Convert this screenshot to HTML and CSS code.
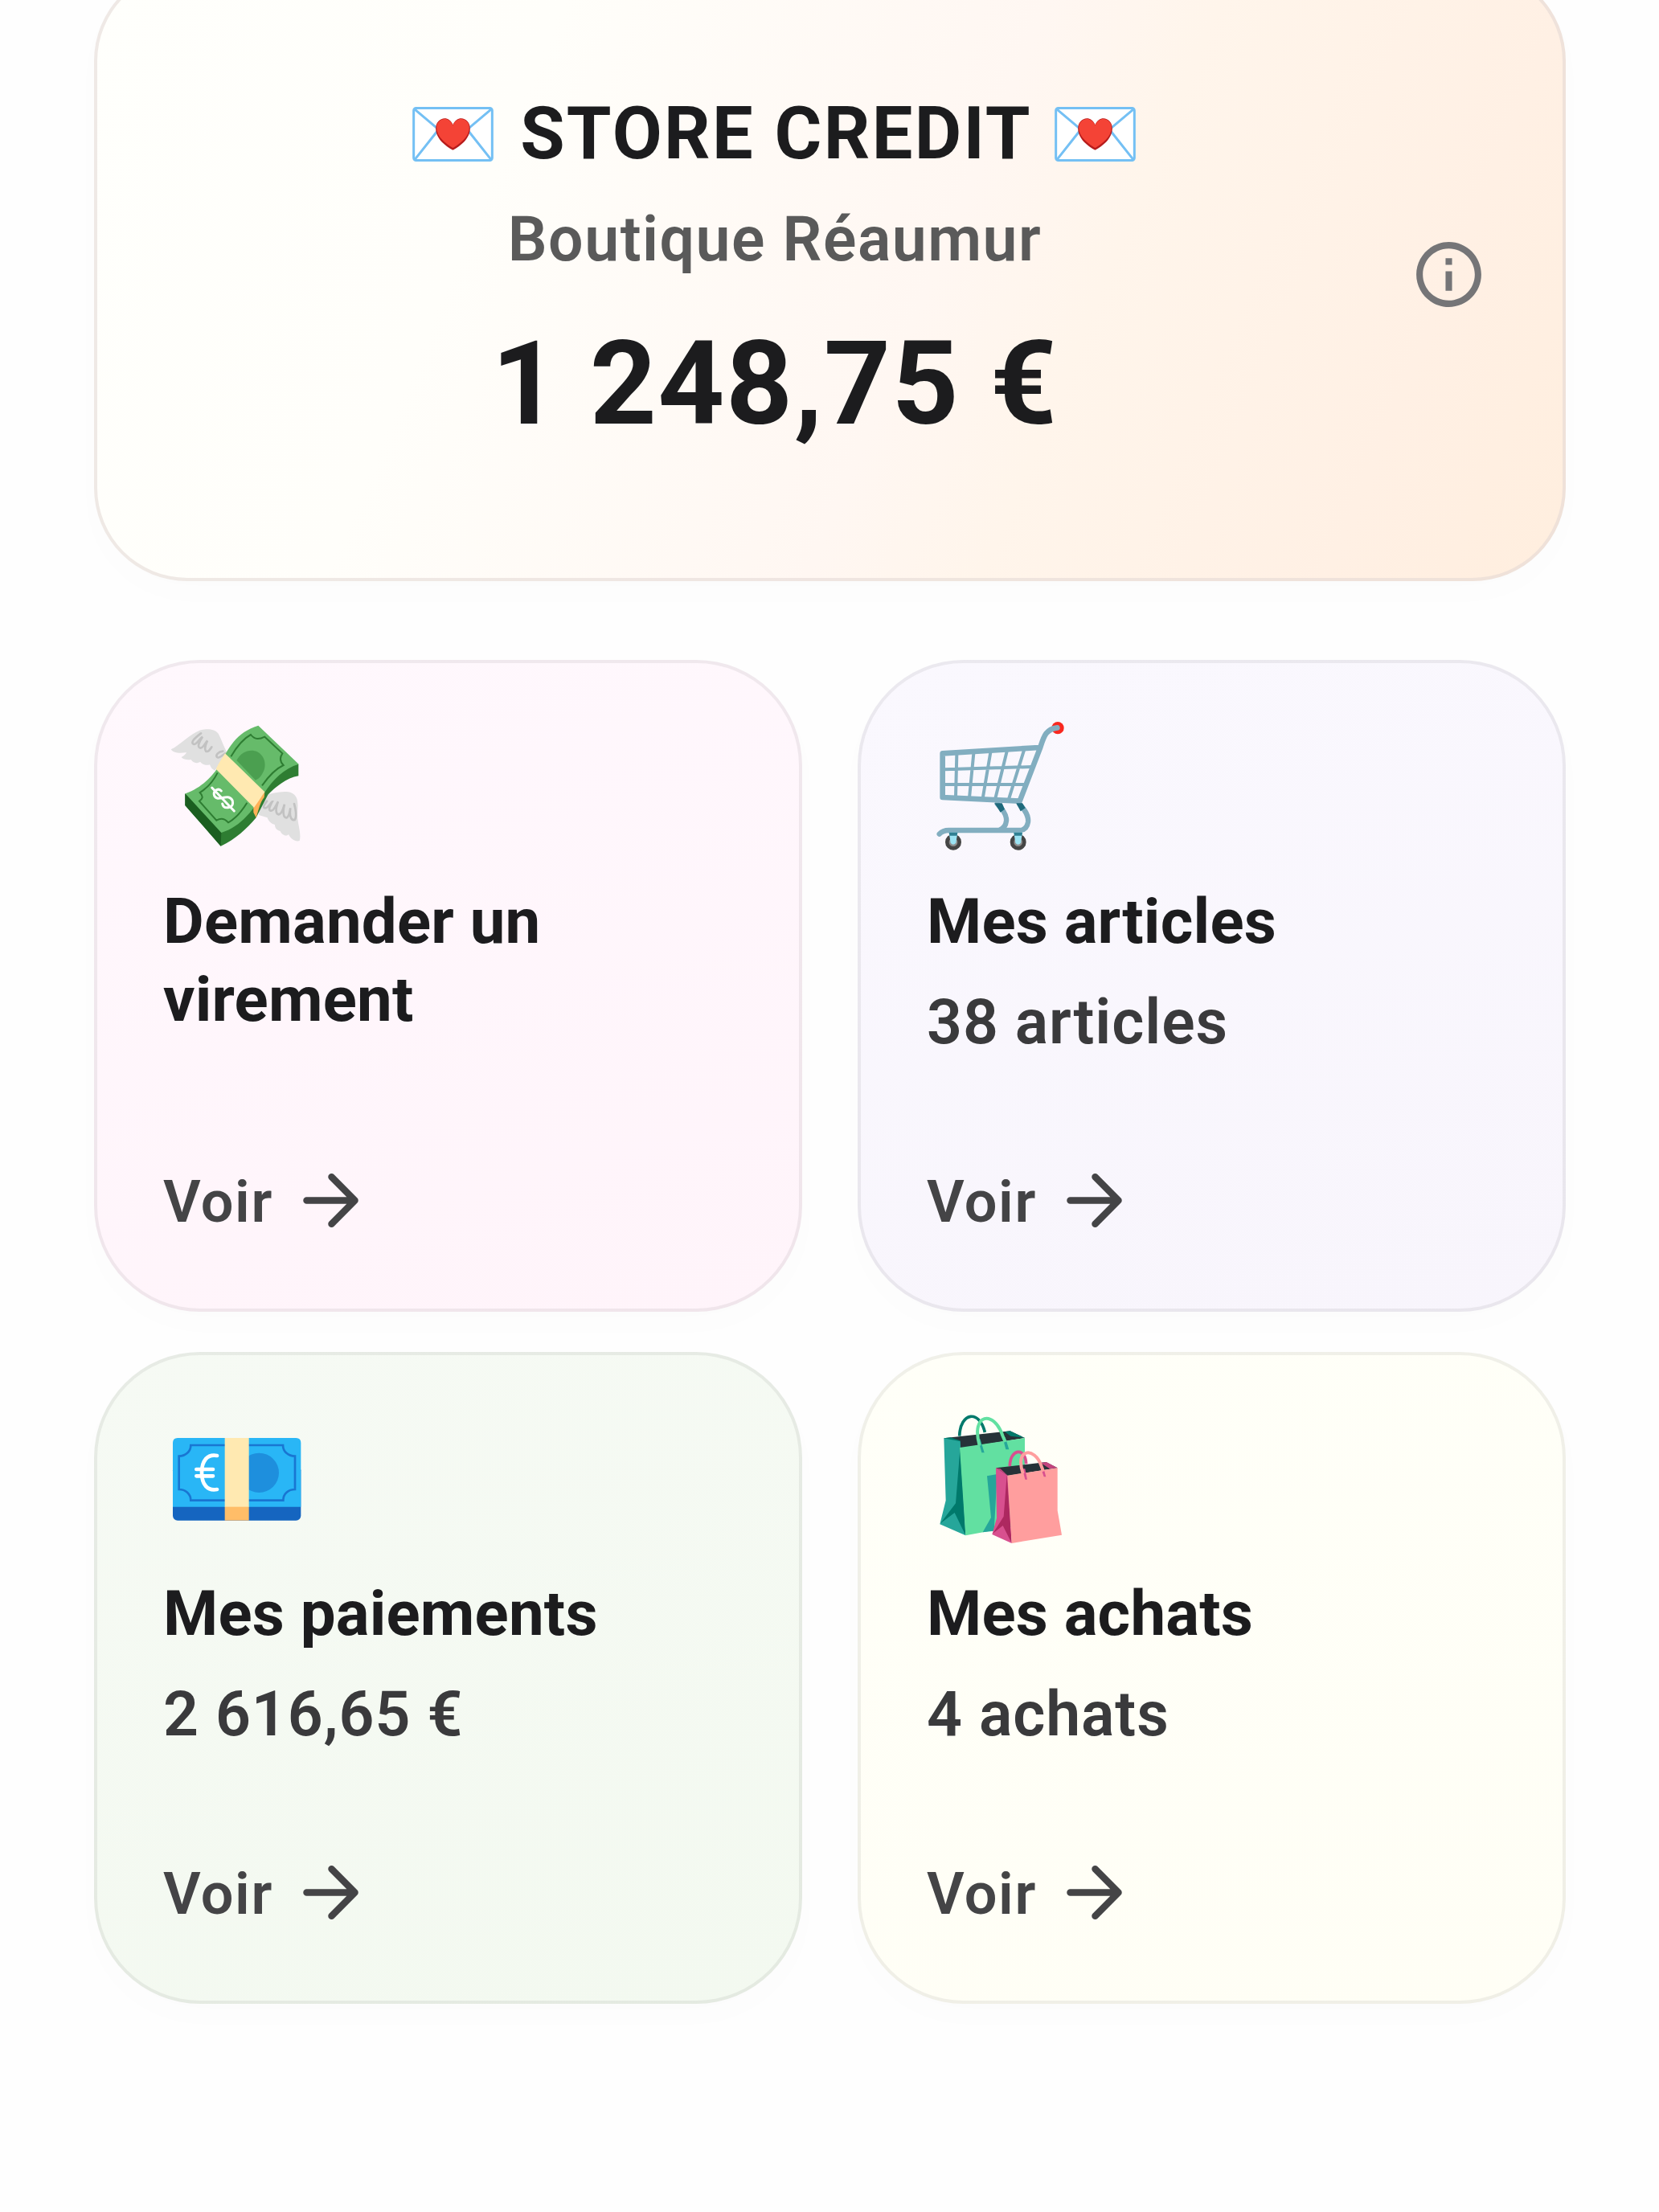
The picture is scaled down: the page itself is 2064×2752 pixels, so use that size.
FILE: index.html
```html
<!DOCTYPE html>
<html lang="fr">
<head>
  <meta charset="UTF-8">
  <meta name="viewport" content="width=device-width, initial-scale=1.0">
  <title>Store Credit</title>
  <link rel="stylesheet" href="styles.css">
</head>
<body>
  <svg class="defs" width="0" height="0">
    <symbol id="letter" viewBox="73 96 302 204">
      <rect x="77.500" y="100.500" width="293" height="195" rx="9" fill="#fff" stroke="#74c0f4" stroke-width="9"/>
      <path d="M80 104L168 178M368 104L280 178M82 292L166 186M366 292L282 186" stroke="#74c0f4" stroke-width="9"/>
      <path d="M224 257C196 242 160 214 160 176C160 138 207 122 224 163C241 122 288 138 288 176C288 214 252 242 224 257Z" fill="#b71c1c"/>
      <path d="M224 249C198 233 163 208 163 173C163 139 208 126 224 165C240 126 285 139 285 173C285 208 250 233 224 249Z" fill="#f44336"/>
    </symbol>
    <symbol id="arrow" viewBox="0 0 69 69">
      <path d="M4.500 34.500H64.500M35.500 5.200L64.500 34.500L35.500 63.800" fill="none" stroke="currentColor" stroke-width="8.500" stroke-linecap="round" stroke-linejoin="round"/>
    </symbol>
  </svg>

  <main class="page">
    <section class="credit">
      <div class="credit-body">
        <h1 class="credit-title">
          <svg class="letter"><use href="#letter"/></svg>
          <span>STORE CREDIT</span>
          <svg class="letter"><use href="#letter"/></svg>
        </h1>
        <p class="credit-shop">Boutique Réaumur</p>
        <p class="credit-amount">1 248,75 €</p>
      </div>
      <svg class="info" viewBox="0 0 24 24">
        <path fill="currentColor" d="M11 7h2v2h-2zm0 4h2v6h-2zm1-9C6.480 2 2 6.480 2 12s4.480 10 10 10 10-4.480 10-10S17.520 2 12 2zm0 18c-4.410 0-8-3.590-8-8s3.590-8 8-8 8 3.590 8 8-3.590 8-8 8z"/>
      </svg>
    </section>

    <section class="grid">
      <a class="tile tile-pink">
        <svg class="emoji" viewBox="42 30 540 510">
          <!-- wings -->
          <path d="M68 157C100 142 138 100 175 86C200 78 232 80 245 98C258 122 264 145 278 170L232 236C222 232 216 224 213 214C200 218 185 214 177 203C165 211 150 208 143 195C132 197 112 194 107 186C118 180 124 174 126 168C105 172 80 173 68 157Z" fill="#e0e0e0"/>
          <path d="M180 97C160 112 142 128 150 136C160 145 172 120 186 110C172 130 165 150 178 152C190 152 196 132 204 124C194 146 192 164 202 165C212 164 216 154 220 148M262 164C244 166 234 178 240 186C248 192 262 178 270 172" fill="none" stroke="#c2c2c2" stroke-width="8" stroke-linecap="round"/>
          <path d="M415 328C450 322 490 308 520 320C546 334 542 362 540 400C540 436 556 470 548 498C534 504 514 490 507 474C498 484 482 476 476 462C462 458 456 450 456 438C444 436 432 426 428 412L396 402L400 350Z" fill="#e0e0e0"/>
          <path d="M426 350C414 366 410 376 420 376C432 376 442 352 446 352C436 370 430 386 442 386C456 384 462 358 468 352C458 380 458 398 470 400C484 398 488 372 492 362C484 392 488 414 500 412C508 410 512 388 514 376C510 400 514 424 530 420C538 410 534 380 528 360" fill="none" stroke="#c2c2c2" stroke-width="8" stroke-linecap="round"/>
          <!-- bundle -->
          <path d="M544 212V256C500 262 456 300 430 326L386 412C350 454 310 492 254 518L121 366V322L260 440L400 200Z" fill="#2e7d32"/>
          <path d="M121 322L256 464L254 518L121 366Z" fill="#1b5e20"/>
          <path d="M394 68L545 212C490 228 450 268 416 320C370 388 330 444 256 468L122 322C180 300 212 268 244 224C284 150 310 94 394 68Z" fill="#66bb6a"/>
          <path d="M292 184C314 146 336 118 366 102C382 122 398 120 418 110L484 172C472 190 476 204 488 216C458 230 432 258 408 292M242 244C226 276 202 302 176 318C192 334 184 344 174 350L238 422C254 412 268 414 282 430C312 414 332 388 352 356" fill="none" stroke="#2e7d32" stroke-width="6"/>
          <path d="M313 198C330 166 364 154 390 166C420 182 428 220 408 250C400 264 392 268 384 272Z" fill="#4b9f50"/>
          <path d="M376 370L418 316L416 336C400 356 396 380 386 412L376 392Z" fill="#ffb057"/>
          <path d="M270 172L418 316C404 336 392 356 378 374L236 230C246 208 258 192 270 172Z" fill="#ffe9b1"/>
          <path d="M256 312C242 298 224 314 230 330C240 350 264 332 284 336C306 344 302 374 282 374C270 376 262 370 260 360M221 300L304 387" fill="none" stroke="#fff" stroke-width="9" stroke-linecap="round"/>
        </svg>
        <h2 class="tile-title">Demander un virement</h2>
        <div class="tile-link"><span>Voir</span><svg class="arrow"><use href="#arrow"/></svg></div>
      </a>

      <a class="tile tile-violet">
        <svg class="emoji" viewBox="12 30 540 510">
          <circle cx="498" cy="77" r="23" fill="#f9281f"/>
          <g fill="none" stroke="#82aec0" stroke-linejoin="round" stroke-linecap="round">
            <path d="M496 76C452 82 446 110 432 152L356 350L68 336V172L428 150" stroke-width="20"/>
            <path d="M74 232L400 222M74 288H376M121 176L117 334M184 172L168 338M247 168L218 340M308 164L264 344M372 160L314 346" stroke-width="12"/>
            <path d="M272 360C296 384 308 404 306 424C304 442 296 452 280 458M354 360C376 384 390 404 387 428C384 448 374 458 356 459H92C76 459 64 464 56 473" stroke-width="19"/>
          </g>
          <path d="M262 358H290L300 380L284 392ZM343 358H366L377 376L359 388Z" fill="#1f6a7c"/>
          <g>
            <circle cx="108" cy="503" r="23" fill="#8d8d8d" stroke="#454545" stroke-width="14"/>
            <circle cx="350" cy="503" r="23" fill="#8d8d8d" stroke="#454545" stroke-width="14"/>
            <path d="M92 467H124L118 506Q108 518 98 506ZM334 467H366L360 506Q350 518 340 506Z" fill="#9be2f2"/>
            <path d="M92 467H124L122 479H94ZM334 467H366L364 479H336Z" fill="#2f7f92"/>
          </g>
        </svg>
        <h2 class="tile-title">Mes articles</h2>
        <p class="tile-sub">38 articles</p>
        <div class="tile-link"><span>Voir</span><svg class="arrow"><use href="#arrow"/></svg></div>
      </a>

      <a class="tile tile-green">
        <svg class="emoji" viewBox="42 33 540 510">
          <rect x="75" y="250" width="478" height="205" rx="18" fill="#1565c0"/>
          <path d="M93 147H535Q553 147 553 165V404H75V165Q75 147 93 147Z" fill="#29b6f6"/>
          <path d="M142 174H486C486 198 506 215 531 215V339C506 339 487 356 487 380H142C142 356 122 339 98 339V215C122 215 142 198 142 174Z" fill="none" stroke="#1976d2" stroke-width="8"/>
          <circle cx="397" cy="277" r="74" fill="#1e8fdd"/>
          <rect x="269" y="147" width="90" height="258" fill="#ffe9b1"/>
          <rect x="269" y="404" width="90" height="51" fill="#ffbd68"/>
          <path d="M240 213C204 206 183 232 183 276C183 320 204 346 240 339M163 264H225M163 289H225" fill="none" stroke="#fff" stroke-width="14" stroke-linecap="round"/>
        </svg>
        <h2 class="tile-title">Mes paiements</h2>
        <p class="tile-sub">2 616,65 €</p>
        <div class="tile-link"><span>Voir</span><svg class="arrow"><use href="#arrow"/></svg></div>
      </a>

      <a class="tile tile-yellow">
        <svg class="emoji" viewBox="12 33 540 510">
          <!-- green bag -->
          <path d="M73 148L320 121L375 147L132 186Z" fill="#263238"/>
          <path d="M300 124L320 121L375 147L322 140ZM73 148L98 145L134 157V186Z" fill="#00796b"/>
          <path d="M131 140C134 50 206 40 226 126" fill="none" stroke="#00796b" stroke-width="11"/>
          <path d="M73 148L134 160L154 511L58 469L80 380Z" fill="#26a69a"/>
          <path d="M134 180L117 391L60 466L113 426L154 511Z" fill="#00796b"/>
          <path d="M132 183L375 147V470L154 511Z" fill="#62e0a1"/>
          <path d="M234 289L272 282L260 494L218 499L249 444Z" fill="#26a69a"/>
          <path d="M200 150L214 202H224L208 150ZM292 144L304 190H316L302 144Z" fill="#26a69a"/>
          <path d="M206 176C172 54 260 42 292 138L302 162" fill="none" stroke="#62e0a1" stroke-width="12"/>
          <!-- pink bag -->
          <path d="M267 259L454 237L497 259L310 288Z" fill="#263238"/>
          <path d="M434 240L456 237L497 259L468 262ZM267 259L284 262L312 288Z" fill="#c2447e"/>
          <path d="M319 252C320 186 378 180 380 244" fill="none" stroke="#d8508f" stroke-width="11"/>
          <path d="M267 259L312 288L326 540L253 507L270 446Z" fill="#d8508f"/>
          <path d="M308 284L296 440L256 503L293 474L326 540Z" fill="#ad2860"/>
          <path d="M310 287L497 259V418L513 509L326 540Z" fill="#ff9e9e"/>
          <path d="M366 262L376 302H384L376 262ZM434 256L446 292H454L444 256Z" fill="#d8508f"/>
          <path d="M368 280C336 184 412 180 436 250L444 272" fill="none" stroke="#ff9e9e" stroke-width="12"/>
        </svg>
        <h2 class="tile-title">Mes achats</h2>
        <p class="tile-sub">4 achats</p>
        <div class="tile-link"><span>Voir</span><svg class="arrow"><use href="#arrow"/></svg></div>
      </a>
    </section>
  </main>
</body>
</html>
```

FILE: styles.css
```css
* {
  box-sizing: border-box;
}
body {
  margin: 0;
  background: #fefefe;
  font-family: Roboto, sans-serif;
  color: #1c1c1e;
  overflow: hidden;
}
h1, h2, p {
  margin: 0;
}
.defs {
  position: absolute;
}
.page {
  height: 2752px;
  padding: 0 116px 0 117px;
  display: flow-root;
}

/* credit card, scrolled partly under the top edge */
.credit {
  display: flex;
  align-items: center;
  gap: 42px;
  height: 763px;
  margin-top: -40px;
  padding: 0 93px;
  border: 4px solid rgba(225, 215, 212, 0.55);
  border-radius: 116px;
  background: linear-gradient(112.6deg, #fffffc 0%, #fffefa 28%, #fff7f2 56%, #fff5eb 66%, #fff0e4 86%, #ffeede 100%) border-box;
  box-shadow: 0 16px 48px rgba(0, 0, 0, 0.012);
}
.credit-body {
  flex: 1;
  align-self: flex-start;
  padding-top: 148px;
  text-align: center;
}
.credit-title {
  display: flex;
  justify-content: center;
  align-items: center;
  gap: 33px;
  font-size: 90px;
  line-height: 110px;
  font-weight: 700;
  letter-spacing: 2.3px;
}
.credit-title span {
  margin-right: -5px;
}
.letter {
  width: 101px;
  height: 68px;
}
.credit-shop {
  margin-top: 28px;
  padding-left: 2px;
  font-size: 77px;
  line-height: 96px;
  font-weight: 600;
  letter-spacing: 1.5px;
  color: #5a5a5a;
}
.credit-amount {
  margin-top: 46px;
  padding-left: 2px;
  font-size: 145px;
  line-height: 170px;
  font-weight: 700;
  letter-spacing: 1.5px;
}
.info {
  width: 97px;
  height: 97px;
  color: #757577;
}

.grid {
  display: grid;
  grid-template-columns: 1fr 1fr;
  grid-auto-rows: 811px;
  gap: 50px 69px;
  margin-top: 98px;
}
.tile {
  display: flex;
  flex-direction: column;
  align-items: flex-start;
  padding: 65px 82px 85px;
  border: 4px solid rgba(0, 0, 0, 0.06);
  border-radius: 132px;
  box-shadow: 0 16px 48px rgba(0, 0, 0, 0.012);
}
.tile-pink {
  background: linear-gradient(165deg, #fff8fd, #fff4fa) border-box;
}
.tile-violet {
  background: linear-gradient(165deg, #faf8fe, #f8f5fc) border-box;
}
.tile-green {
  background: linear-gradient(165deg, #f6faf4, #f3f9f0) border-box;
}
.tile-yellow {
  background: linear-gradient(165deg, #fffff8, #fffef5) border-box;
}
.emoji {
  width: 180px;
  height: 170px;
  margin-left: 1px;
}
.tile-title {
  margin-top: 38px;
  font-size: 78px;
  line-height: 97px;
  font-weight: 700;
  letter-spacing: 0.2px;
}
.tile-sub {
  margin-top: 29px;
  font-size: 77px;
  line-height: 97px;
  font-weight: 600;
  letter-spacing: 0.9px;
  color: #3a3a3c;
}
.tile-link {
  display: flex;
  align-items: center;
  gap: 37px;
  height: 100px;
  margin-top: auto;
  font-size: 72px;
  font-weight: 600;
  letter-spacing: 1.6px;
  color: #444446;
}
.tile-link span {
  padding-top: 5px;
}
.arrow {
  width: 69px;
  height: 69px;
}
```
